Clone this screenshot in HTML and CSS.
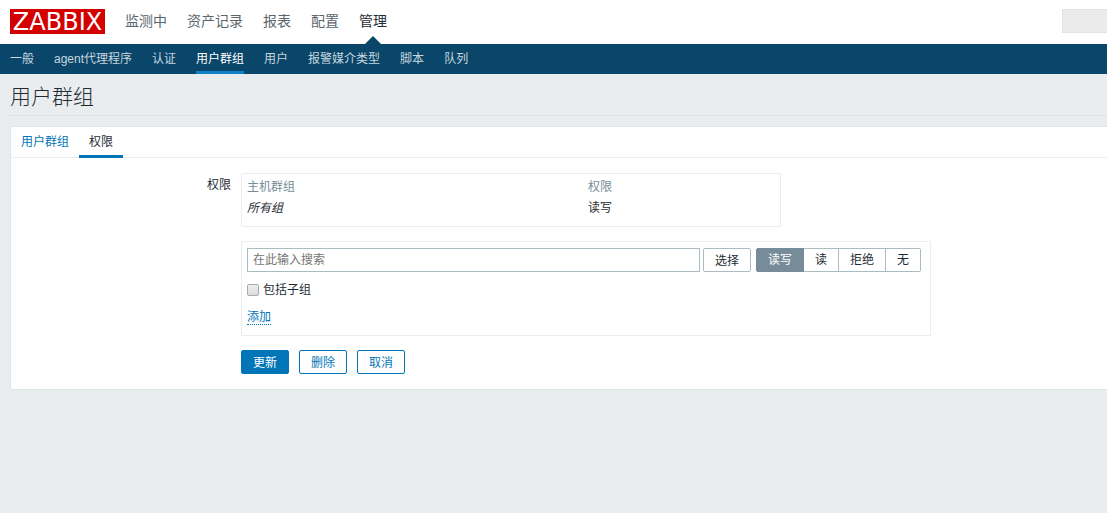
FILE: index.html
```html
<!DOCTYPE html>
<html lang="zh-CN">
<head>
<meta charset="utf-8">
<title>用户群组</title>
<link rel="stylesheet" href="styles.css">
</head>
<body>
<header class="topbar">
  <a class="logo" href="#">ZABBIX</a>
  <nav class="main-nav">
    <a href="#">监测中</a>
    <a href="#">资产记录</a>
    <a href="#">报表</a>
    <a href="#">配置</a>
    <a class="active" href="#">管理</a>
  </nav>
  <input class="global-search" type="text" aria-label="搜索">
</header>
<nav class="sub-nav">
  <a href="#">一般</a>
  <a href="#">agent代理程序</a>
  <a href="#">认证</a>
  <a class="active" href="#">用户群组</a>
  <a href="#">用户</a>
  <a href="#">报警媒介类型</a>
  <a href="#">脚本</a>
  <a href="#">队列</a>
</nav>
<main class="content">
  <h1 class="page-title">用户群组</h1>
  <form class="panel">
    <div class="tabs">
      <a href="#">用户群组</a>
      <a class="active" href="#">权限</a>
    </div>
    <div class="form-grid">
      <div class="form-label">权限</div>
      <div class="form-fields">
        <div class="box rights-box">
          <table class="rights">
            <thead><tr><th>主机群组</th><th>权限</th></tr></thead>
            <tbody><tr><td><em>所有组</em></td><td>读写</td></tr></tbody>
          </table>
        </div>
        <div class="box new-right">
          <div class="search-row">
            <input class="group-input" type="text" placeholder="在此输入搜索" aria-label="主机群组">
            <button class="btn btn-grey" type="button">选择</button>
            <div class="segmented">
              <label><input type="radio" name="right" checked><span>读写</span></label>
              <label><input type="radio" name="right"><span>读</span></label>
              <label><input type="radio" name="right"><span>拒绝</span></label>
              <label><input type="radio" name="right"><span>无</span></label>
            </div>
          </div>
          <label class="check"><input type="checkbox">包括子组</label>
          <button class="link-btn" type="button">添加</button>
        </div>
        <div class="actions">
          <button class="btn btn-primary" type="button">更新</button>
          <button class="btn" type="button">删除</button>
          <button class="btn" type="button">取消</button>
        </div>
      </div>
    </div>
  </form>
</main>
</body>
</html>
```
FILE: styles.css
```css
* { box-sizing: border-box; }

body {
  margin: 0;
  background: #e9edf0;
  color: #1f2c33;
  font: 12px/18px "Liberation Sans", "Noto Sans CJK SC", sans-serif;
}

a { color: inherit; text-decoration: none; }

button, input { margin: 0; font: inherit; }

.topbar {
  display: flex;
  align-items: center;
  height: 44px;
  padding: 0 0 2px 10px;
  background: #fff;
}

.logo {
  width: 95px;
  height: 25px;
  background: #d40000;
  color: #fff;
  font: 24px/27px "DejaVu Sans", sans-serif;
  text-align: center;
}

.main-nav {
  display: flex;
  align-self: stretch;
  gap: 20px;
  margin-left: 20px;
  color: #5a666d;
  font-size: 14px;
  line-height: 42px;
}

.main-nav .active { position: relative; color: #1f2c33; }

.main-nav .active::after {
  content: "";
  position: absolute;
  bottom: -2px;
  left: 50%;
  margin-left: -8px;
  border: 8px solid transparent;
  border-top: 0;
  border-bottom-color: #0a466a;
}

.global-search {
  width: 45px;
  height: 24px;
  margin-left: auto;
  background: #ebebeb;
  border: 1px solid #dfe4e7;
  border-width: 1px 0 1px 1px;
}

.sub-nav {
  display: flex;
  gap: 20px;
  height: 30px;
  padding: 0 10px;
  background: #0a466a;
  color: #c8d6df;
  line-height: 30px;
}

.sub-nav .active { color: #fff; box-shadow: inset 0 -3px #0f81c9; }

.content { padding-left: 10px; }

.page-title {
  height: 42px;
  margin: 0 0 10px;
  border-bottom: 1px solid #dce2e5;
  font-size: 21px;
  font-weight: 300;
  line-height: 46px;
}

.panel {
  background: #fff;
  border: 1px solid #dfe4e7;
  border-right: 0;
}

.tabs {
  display: flex;
  height: 31px;
  border-bottom: 1px solid #ebeef0;
  color: #0275b8;
  line-height: 31px;
}

.tabs a { height: 31px; padding: 0 10px; }

.tabs .active { color: #1f2c33; box-shadow: inset 0 -3px #0275b8; }

.form-grid {
  display: grid;
  grid-template-columns: 220px 1fr;
  gap: 10px;
  padding: 15px 0;
}

.form-label { padding-top: 3px; text-align: right; }

.form-fields {
  display: flex;
  flex-direction: column;
  align-items: flex-start;
  gap: 14px;
}

.box { border: 1px solid #ebeef0; padding: 3px 5px; }

.rights-box { width: 540px; padding-bottom: 7px; }

.rights { width: 100%; border-collapse: collapse; table-layout: fixed; }

.rights th, .rights td {
  height: 21px;
  padding: 0;
  font-weight: 400;
  line-height: 21px;
  text-align: left;
}

.rights th { color: #768d99; }

.rights th:first-child { width: 341px; }

.new-right { width: 690px; padding: 6px 9px 10px 5px; }

.search-row { display: flex; }

.group-input {
  flex: 1;
  min-width: 0;
  height: 24px;
  margin-right: 3px;
  padding: 0 5px;
  border: 1px solid #acbbc2;
}

.group-input::placeholder { color: #757575; }

.btn {
  height: 24px;
  padding: 1px 11px 0;
  background: #fff;
  border: 1px solid #0275b8;
  border-radius: 2px;
  color: #0275b8;
  line-height: 22px;
}

.btn-grey { border-color: #acbbc2; color: #1f2c33; }

.btn-primary { background: #0275b8; color: #fff; }

.segmented { display: flex; margin-left: 5px; }

.segmented input { position: absolute; opacity: 0; }

.segmented span {
  display: block;
  height: 24px;
  padding: 0 11px;
  border: 1px solid #acbbc2;
  border-left-width: 0;
  line-height: 22px;
}

.segmented label:first-child span { border-left-width: 1px; border-radius: 2px 0 0 2px; }

.segmented label:last-child span { border-radius: 0 2px 2px 0; }

.segmented input:checked + span {
  background: #768d99;
  border-color: #768d99;
  color: #fff;
}

.check {
  display: flex;
  align-items: center;
  gap: 4px;
  margin: 9px 0;
}

.check input {
  appearance: none;
  width: 12px;
  height: 12px;
  background: linear-gradient(#eee, #dcdcdc);
  border: 1px solid #aaa;
  border-radius: 2px;
}

.link-btn {
  display: block;
  padding: 2px 0 0;
  background: none;
  border: 0;
  border-bottom: 1px dotted #0275b8;
  color: #0275b8;
  line-height: 14px;
}

.actions { display: flex; gap: 10px; }
```
